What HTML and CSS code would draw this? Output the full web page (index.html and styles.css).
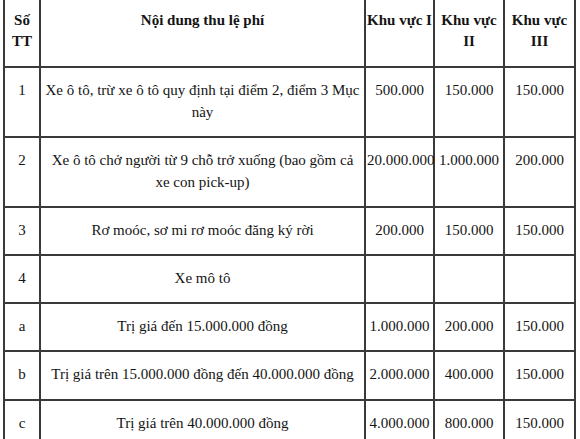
FILE: index.html
```html
<!DOCTYPE html>
<html lang="vi">
<head>
<meta charset="utf-8">
<title>Lệ phí đăng ký</title>
<link rel="stylesheet" href="styles.css">
</head>
<body>
<table class="fee-table">
  <colgroup>
    <col class="c-stt">
    <col class="c-content">
    <col class="c-k1">
    <col class="c-k2">
    <col class="c-k3">
  </colgroup>
  <thead>
    <tr>
      <th>Số TT</th>
      <th>Nội dung thu lệ phí</th>
      <th>Khu vực I</th>
      <th>Khu vực II</th>
      <th>Khu vực III</th>
    </tr>
  </thead>
  <tbody>
    <tr>
      <td>1</td>
      <td>Xe ô tô, trừ xe ô tô quy định tại điểm 2, điểm 3 Mục này</td>
      <td>500.000</td>
      <td>150.000</td>
      <td>150.000</td>
    </tr>
    <tr>
      <td>2</td>
      <td>Xe ô tô chở người từ 9 chỗ trở xuống (bao gồm cả xe&nbsp;con pick-up)</td>
      <td>20.000.000</td>
      <td>1.000.000</td>
      <td>200.000</td>
    </tr>
    <tr>
      <td>3</td>
      <td>Rơ moóc, sơ mi rơ moóc đăng ký rời</td>
      <td>200.000</td>
      <td>150.000</td>
      <td>150.000</td>
    </tr>
    <tr>
      <td>4</td>
      <td>Xe mô tô</td>
      <td></td>
      <td></td>
      <td></td>
    </tr>
    <tr>
      <td>a</td>
      <td>Trị giá đến 15.000.000 đồng</td>
      <td>1.000.000</td>
      <td>200.000</td>
      <td>150.000</td>
    </tr>
    <tr>
      <td>b</td>
      <td>Trị giá trên 15.000.000 đồng đến 40.000.000 đồng</td>
      <td>2.000.000</td>
      <td>400.000</td>
      <td>150.000</td>
    </tr>
    <tr>
      <td>c</td>
      <td>Trị giá trên 40.000.000 đồng</td>
      <td>4.000.000</td>
      <td>800.000</td>
      <td>150.000</td>
    </tr>
  </tbody>
</table>
</body>
</html>
```

FILE: styles.css
```css
html, body {
  margin: 0;
  padding: 0;
  background: #ffffff;
}

body {
  font-family: "Liberation Serif", "Times New Roman", serif;
  font-size: 15px;
  color: #141414;
  overflow: hidden;
}

.fee-table {
  border-collapse: collapse;
  table-layout: fixed;
  width: 572px;
  margin: -2px 0 0 3px;
}

.c-stt { width: 36px; }
.c-content { width: 325px; }
.c-k1 { width: 69px; }
.c-k2 { width: 70px; }
.c-k3 { width: 71px; }

.fee-table th,
.fee-table td {
  border: 2px solid #3a3a3a;
  padding: 11px 1px 13.1px;
  line-height: 22px;
  text-align: center;
  vertical-align: top;
}

.fee-table th {
  font-weight: bold;
  line-height: 21px;
  padding: 10px 1px 14px;
}
```
